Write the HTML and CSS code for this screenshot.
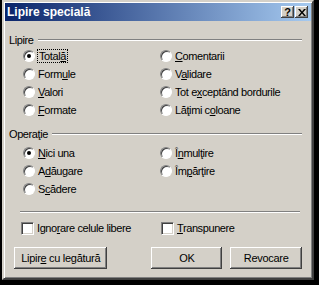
FILE: index.html
```html
<!DOCTYPE html>
<html lang="ro">
<head>
    <meta charset="UTF-8">
    <title>Lipire specială</title>
    <link rel="stylesheet" href="styles.css">
</head>
<body>
    <div class="window">
        <div class="titlebar">
            <span class="title">Lipire specială</span>
            <div class="title-buttons">
                <span class="tbtn">?</span>
                <span class="tbtn close">
                    <svg width="8" height="7" viewBox="0 0 8 7"><path d="M0 0h2l2 2.5L6 0h2L5 3.5 8 7H6L4 4.5 2 7H0l3-3.5z" fill="#000"/></svg>
                </span>
            </div>
        </div>

        <div class="content">
            <div class="group-title">
                <span>Lipire</span>
                <div class="etched"></div>
            </div>
            <div class="options">
                <label class="opt"><span class="radio checked"></span><span class="focus">Total<u>ă</u></span></label>
                <label class="opt"><span class="radio"></span><span><u>C</u>omentarii</span></label>
                <label class="opt"><span class="radio"></span><span>Form<u>u</u>le</span></label>
                <label class="opt"><span class="radio"></span><span>V<u>a</u>lidare</span></label>
                <label class="opt"><span class="radio"></span><span><u>V</u>alori</span></label>
                <label class="opt"><span class="radio"></span><span>Tot e<u>x</u>ceptând bordurile</span></label>
                <label class="opt"><span class="radio"></span><span><u>F</u>ormate</span></label>
                <label class="opt"><span class="radio"></span><span>Lăţimi c<u>o</u>loane</span></label>
            </div>

            <div class="group-title op">
                <span>Operaţie</span>
                <div class="etched"></div>
            </div>
            <div class="options">
                <label class="opt"><span class="radio checked"></span><span><u>N</u>ici una</span></label>
                <label class="opt"><span class="radio"></span><span>Î<u>n</u>mulţire</span></label>
                <label class="opt"><span class="radio"></span><span>A<u>d</u>ăugare</span></label>
                <label class="opt"><span class="radio"></span><span>Îm<u>p</u>ărţire</span></label>
                <label class="opt"><span class="radio"></span><span>S<u>c</u>ădere</span></label>
            </div>

            <div class="etched sep"></div>

            <div class="checks">
                <label class="opt"><span class="check"></span><span>Igno<u>r</u>are celule libere</span></label>
                <label class="opt"><span class="check"></span><span><u>T</u>ranspunere</span></label>
            </div>

            <div class="buttons">
                <button class="btn wide">Lipir<u>e</u> cu legătură</button>
                <button class="btn ok">OK</button>
                <button class="btn">Revocare</button>
            </div>
        </div>
    </div>
</body>
</html>
```

FILE: styles.css
```css
body {
    margin: 0;
    background-color: #000;
    width: 319px;
    height: 285px;
    overflow: hidden;
    font-family: 'Liberation Sans', Arial, sans-serif;
    font-size: 11px;
    letter-spacing: -0.4px;
    color: #000;
}

.window {
    box-sizing: border-box;
    width: 312px;
    height: 280px;
    margin: 0 5px 5px 2px;
    padding: 1px;
    background-color: #d4d0c8;
    border: 2px solid;
    border-color: #d4d0c8 #404040 #404040 #d4d0c8;
    box-shadow: inset 1px 1px #fff, inset -1px -1px #808080;
}

.titlebar {
    height: 18px;
    display: flex;
    align-items: center;
    justify-content: space-between;
    padding: 0 3px 0 2px;
    background: linear-gradient(to right, #0a246a, #a6caf0);
}

.title {
    color: #fff;
    font-weight: bold;
    font-size: 12px;
    letter-spacing: 0;
}

.title-buttons {
    display: flex;
    gap: 1px;
}

.tbtn {
    box-sizing: border-box;
    width: 13px;
    height: 12px;
    display: flex;
    align-items: center;
    justify-content: center;
    background-color: #d4d0c8;
    font-weight: bold;
    font-size: 11px;
    letter-spacing: 0;
    box-shadow: inset -1px -1px #404040, inset 1px 1px #fff, inset -2px -2px #808080;
}

.content {
    padding: 12px 9px 0 4px;
}

.group-title {
    display: flex;
    align-items: center;
    gap: 4px;
    height: 14px;
}

.group-title.op {
    margin-top: 8px;
    margin-bottom: 3px;
}

.etched {
    flex: 1;
    height: 1px;
    background-color: #808080;
    border-bottom: 1px solid #fff;
}

.options {
    display: grid;
    grid-template-columns: 137px 1fr;
    padding-left: 14px;
}

.opt {
    display: flex;
    align-items: center;
    gap: 3px;
    height: 18px;
}

.radio {
    box-sizing: border-box;
    width: 12px;
    height: 12px;
    border-radius: 50%;
    background-color: #fff;
    border: 1px solid;
    border-color: #808080 #fff #fff #808080;
    box-shadow: inset 1px 1px #404040;
    position: relative;
}

.radio.checked::after {
    content: "";
    position: absolute;
    left: 3px;
    top: 3px;
    width: 4px;
    height: 4px;
    border-radius: 50%;
    background-color: #000;
}

.focus {
    outline: 1px dotted #000;
    padding: 0 1px;
}

.sep {
    flex: none;
    margin: 13px 2px 0 11px;
}

.checks {
    display: grid;
    grid-template-columns: 140px 1fr;
    padding-left: 12px;
    margin-top: 6px;
}

.check {
    box-sizing: border-box;
    width: 13px;
    height: 13px;
    background-color: #fff;
    border: 1px solid;
    border-color: #808080 #fff #fff #808080;
    box-shadow: inset 1px 1px #404040, inset -1px -1px #d4d0c8;
}

.buttons {
    display: flex;
    margin-top: 10px;
    padding-left: 5px;
}

.btn {
    box-sizing: border-box;
    height: 22px;
    width: 73px;
    padding: 0;
    border: none;
    background-color: #d4d0c8;
    font-family: 'Liberation Sans', Arial, sans-serif;
    font-size: 11px;
    letter-spacing: -0.3px;
    color: #000;
    box-shadow: inset -1px -1px #404040, inset 1px 1px #fff, inset -2px -2px #808080;
}

.btn.wide {
    width: 95px;
    margin-right: 44px;
}

.btn.ok {
    width: 72px;
    margin-right: 8px;
}
```
